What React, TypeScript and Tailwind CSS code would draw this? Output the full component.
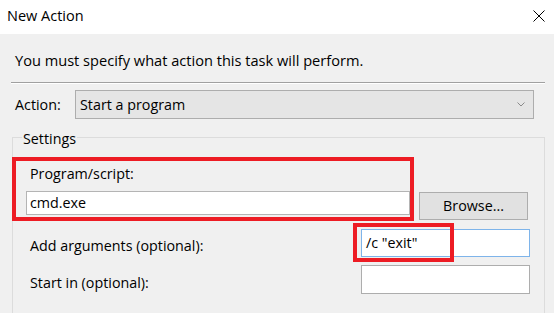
import React from "react";

export default function App() {
  return (
    <div
      className="w-[554px] h-[325px] bg-white overflow-hidden text-black"
      style={{ fontFamily: '"Open Sans", "Noto Sans", sans-serif' }}
    >
      {/* Title bar */}
      <div className="h-[34px] flex items-center justify-between pl-[7px] pr-[9px]">
        <span className="text-[14.5px] leading-[20px] mt-[-2px]">New Action</span>
        <svg width="12" height="12" viewBox="0 0 12 12" className="mt-[-2px]">
          <path d="M0.5 0.5 L11.5 11.5 M11.5 0.5 L0.5 11.5" stroke="#000" strokeWidth="1" fill="none" />
        </svg>
      </div>

      {/* Body */}
      <div className="h-[279px] bg-[#f0f0f0] overflow-hidden pt-[16px] text-[14.3px] leading-[20px]">
        <div className="pl-[15px] text-[14.6px]">
          You must specify what action this task will perform.
        </div>
        <div className="mt-[12px] ml-[11px] w-[534px] border-t border-b border-t-[#a0a0a0] border-b-white" />

        {/* Action row */}
        <div className="mt-[6px] flex items-center h-[29px]">
          <span className="pl-[15px] w-[75px]">Action:</span>
          <div className="w-[459px] h-[29px] bg-[#e5e5e5] border border-[#adadad] flex items-center justify-between pl-[4px] pr-[8px]">
            <span>Start a program</span>
            <svg width="8" height="5" viewBox="0 0 8 5">
              <path d="M0.5 0.5 L4 4 L7.5 0.5" stroke="#8a8a8a" strokeWidth="1" fill="none" />
            </svg>
          </div>
        </div>

        {/* Settings group */}
        <div className="mt-[18px] ml-[12px] w-[533px] h-[200px] border border-[#dcdcdc] relative">
          <span className="absolute left-[9px] top-[-9px] px-[1px] bg-[#f0f0f0]">Settings</span>

          {/* Program/script row */}
          <div className="mt-[19px] ml-[-1px] flex items-end">
            <div className="w-[402px] h-[64px] border-4 border-[#ed1c24] pt-[3px]">
              <div className="pl-[14px]">Program/script:</div>
              <div className="mt-[7px] ml-[10px] w-[384px] h-[24px] bg-white border border-[#b4b4b4] flex items-center pl-[3px]">
                <span>cmd.exe</span>
              </div>
            </div>
            <div className="ml-[5px] mb-[1px] w-[109px] h-[28px] bg-[#e1e1e1] border border-[#adadad] flex items-center justify-center">
              <span>Browse...</span>
            </div>
          </div>

          {/* Add arguments row */}
          <div className="mt-[8px] flex items-center h-[28px]">
            <span className="pl-[17px] w-[348px] mt-[6px]">Add arguments (optional):</span>
            <div className="relative w-[169px] h-[28px] bg-white border border-[#7eb4ea] flex items-center pl-[4px]">
              <span>/c "exit"</span>
              <div className="absolute left-[-9px] top-[-7px] w-[101px] h-[39px] border-4 border-[#ed1c24]" />
            </div>
          </div>

          {/* Start in row */}
          <div className="mt-[8px] flex items-center h-[29px]">
            <span className="pl-[17px] w-[348px] mt-[6px]">Start in (optional):</span>
            <div className="w-[169px] h-[29px] bg-white border border-[#adadad]" />
          </div>
        </div>
      </div>
    </div>
  );
}
